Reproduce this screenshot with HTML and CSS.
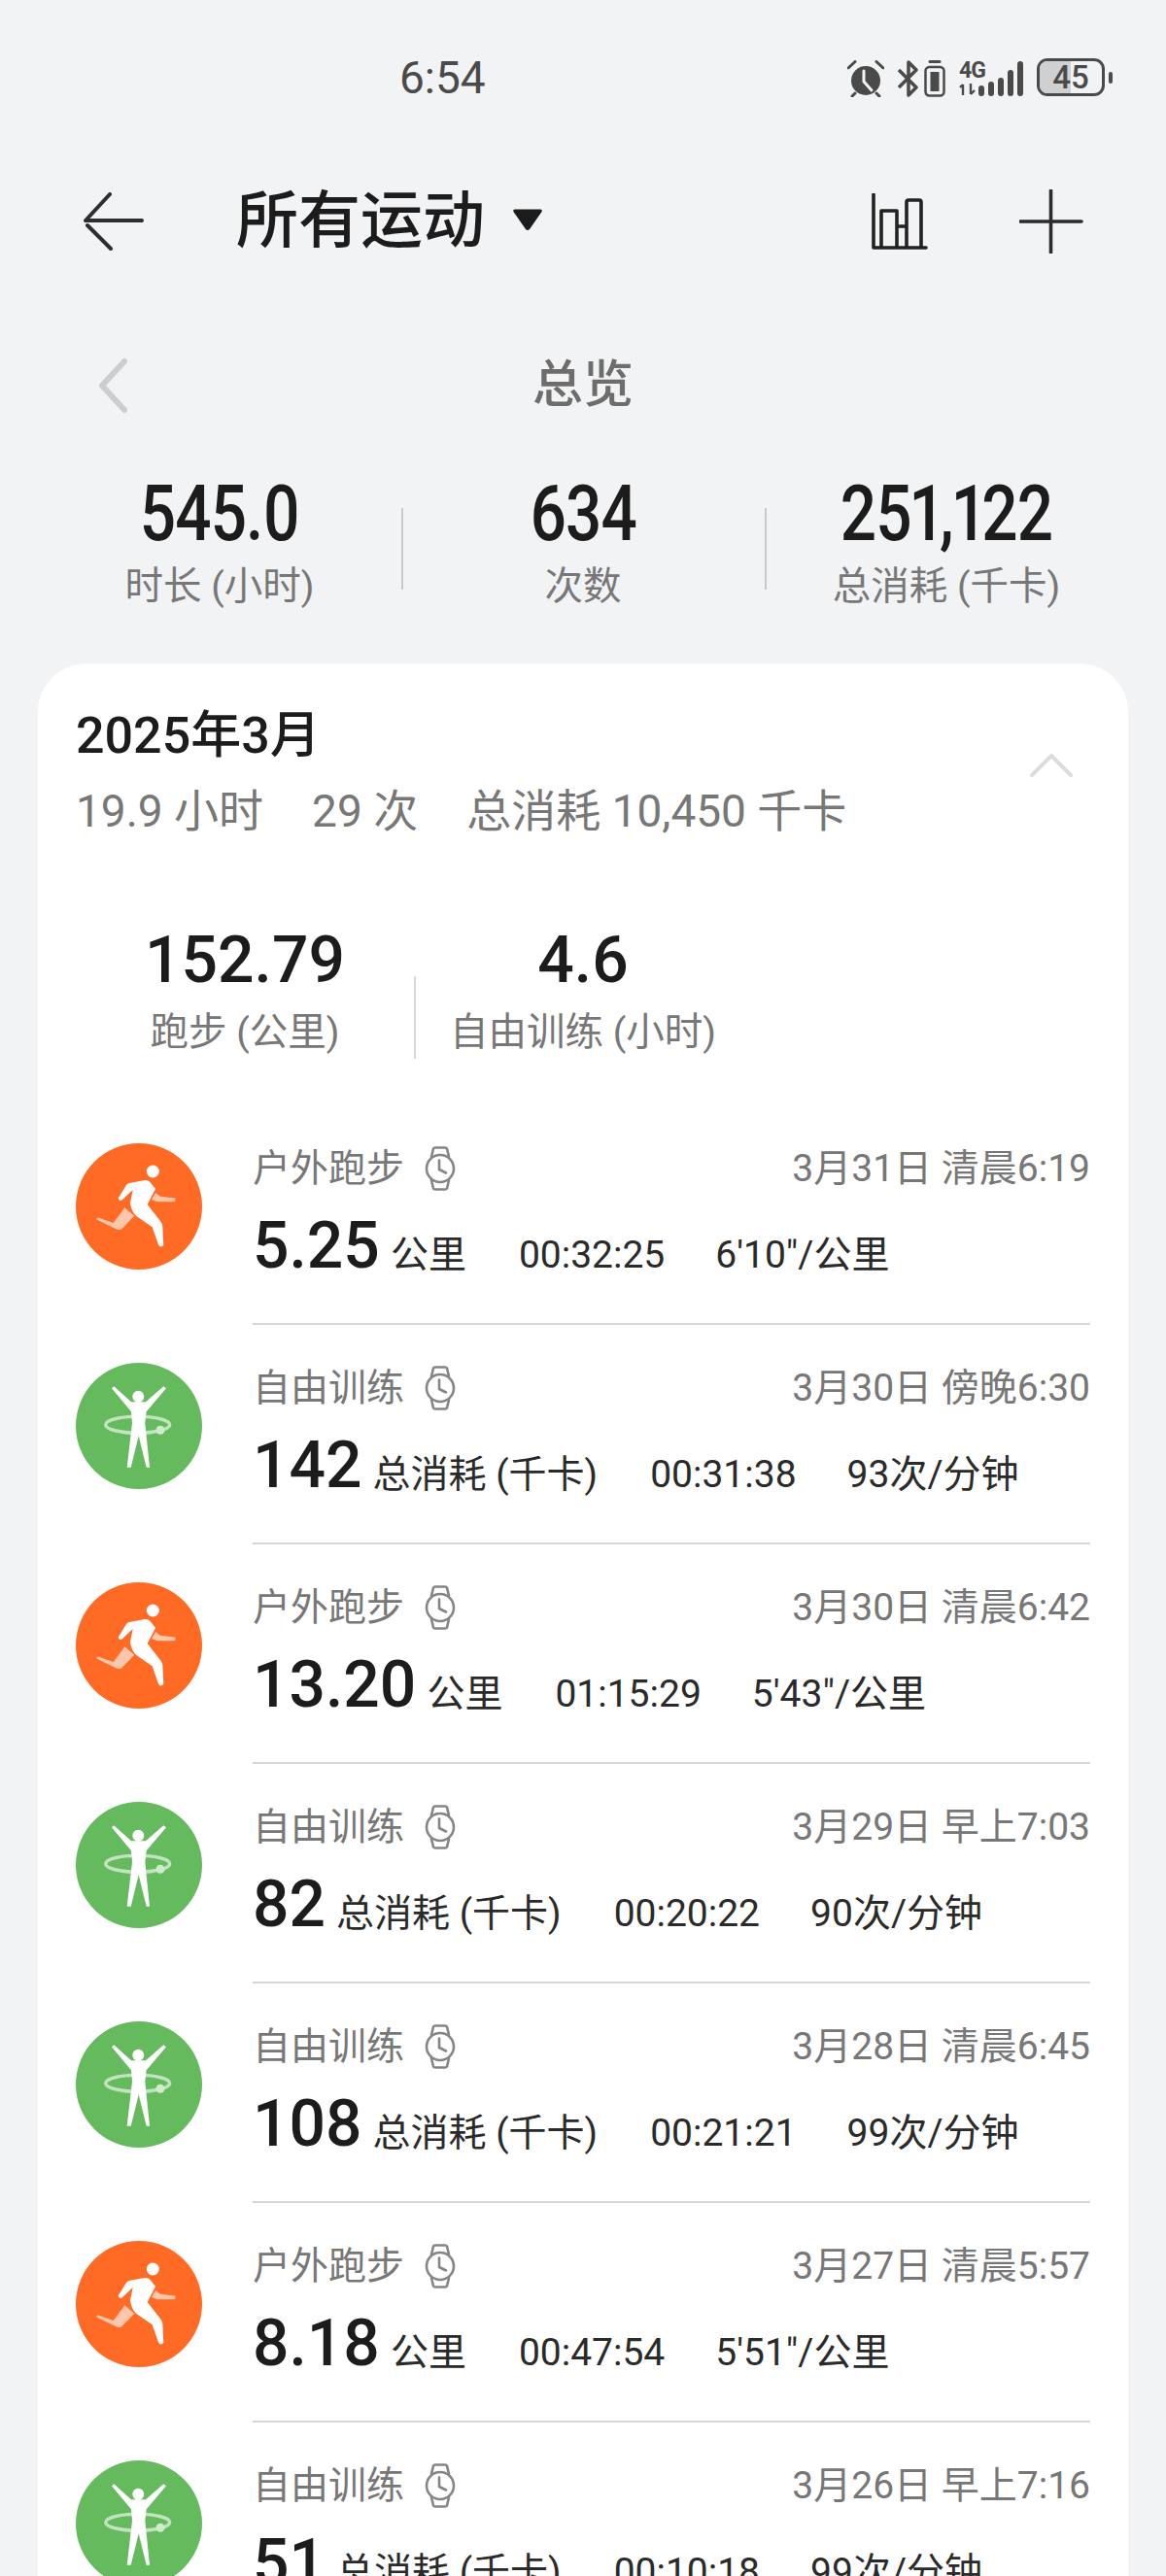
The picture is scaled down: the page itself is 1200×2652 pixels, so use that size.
FILE: index.html
```html
<!DOCTYPE html>
<html lang="zh-CN">
<head>
<meta charset="utf-8">
<title>所有运动</title>
<link rel="stylesheet" href="styles.css">
</head>
<body>
<svg class="defs" width="0" height="0" aria-hidden="true">
  <symbol id="run" viewBox="0 0 130 130">
    <circle cx="65" cy="65" r="65" fill="#ff6a24"/>
    <path d="M82 51 87 54.700 102 56.500Q103.500 58.500 101.300 60.300L84 60.300 78 58ZM21.300 78.500Q21 76.500 23 76.500L38.700 82 50.300 66.300 60.300 74.700 47 88.500Q45 89.500 42 88.500Z" fill="#fff" opacity=".62"/>
    <circle cx="79.300" cy="29" r="6.500" fill="#fff"/>
    <path d="M43.700 56.500 52 43Q53 41.500 55 41L71 38Q74 37.500 76.500 40L82 47 73.700 63 87.700 81Q89 83 89.300 85L90.300 105Q87 108 85 104.500L78.700 86.300 62 74.700Q57 70 56 61.300L58.700 48 47.500 58.500Q44 60 43.700 56.500Z" fill="#fff"/>
  </symbol>
  <symbol id="hoop" viewBox="0 0 130 130">
    <circle cx="65" cy="65" r="65" fill="#65ba5e"/>
    <ellipse cx="63.700" cy="63.700" rx="33" ry="8.500" fill="none" stroke="#fff" stroke-width="3.500" opacity=".6"/>
    <circle cx="64.300" cy="34.700" r="6" fill="#fff"/>
    <path d="M37 26.300 39.300 24.300 57 40.300H72L90.300 24.300 93 26.300 72.700 50.300 71.300 62 76 107.700H72.700L64.700 75.300 56.700 107.700H52.700L58 62 57 50.300Z" fill="#fff"/>
    <circle cx="87" cy="69.300" r="4.500" fill="#cfeccd"/>
  </symbol>
  <symbol id="watch" viewBox="0 0 32 46">
    <g fill="none" stroke="#858585" stroke-width="2.600" stroke-linejoin="round" stroke-linecap="round">
      <path d="M7 11 9 2.500Q9.500 1.500 11 1.500H21Q22.500 1.500 23 2.500L25 11M7 35 9 43.500Q9.500 44.500 11 44.500H21Q22.500 44.500 23 43.500L25 35"/>
      <circle cx="16" cy="23" r="14"/>
      <path d="M15 14.500V24L22 27.500"/>
    </g>
  </symbol>
</svg>

<div class="status">
  <span class="time">6:54</span>
  <div class="status-icons">
    <svg class="s-alarm" viewBox="0 0 38 38"><path d="M1 8 8 1.500M37 8 30 1.500M8 34 5 37M30 34 33 37" fill="none" stroke="#4a4a4a" stroke-width="3" stroke-linecap="round"/><circle cx="19" cy="21" r="15" fill="#4a4a4a"/><path d="M17 11V22L25 31" fill="none" stroke="#f1f3f5" stroke-width="3" stroke-linecap="round"/></svg>
    <svg class="s-bt" viewBox="0 0 24 38"><path d="M2 10 20 28 12 36V2L20 10 2 28" fill="none" stroke="#4a4a4a" stroke-width="3.500" stroke-linejoin="round"/></svg>
    <svg class="s-bat" viewBox="0 0 22 38"><path d="M6 1.500H16" stroke="#4a4a4a" stroke-width="3" stroke-linecap="round"/><rect x="1.500" y="7" width="19" height="29.500" rx="4" fill="none" stroke="#4a4a4a" stroke-width="2.500"/><rect x="6.500" y="12" width="9" height="20" fill="#4a4a4a"/></svg>
    <div class="s-net">
      <span class="s-4g">4G</span>
      <svg class="s-arrows" viewBox="0 0 18 12"><path d="M4 1V12M4 1 1 4M12 0V11M12 11 16 7" fill="none" stroke="#4a4a4a" stroke-width="2.400"/></svg>
    </div>
    <div class="s-bars"><i class="b1"></i><i class="b2"></i><i class="b3"></i><i class="b4"></i><i class="b5"></i></div>
    <div class="s-battery"><div class="s-fill"></div><span class="s-level">45</span></div>
    <div class="s-nub"></div>
  </div>
</div>

<header class="topbar">
  <svg class="ic-back" viewBox="0 0 64 60"><path d="M28 2 3 29H61M5 34 29 58" fill="none" stroke="#2e2e2e" stroke-width="4" stroke-linecap="round" stroke-linejoin="round"/></svg>
  <h1 class="title">所有运动</h1>
  <svg class="ic-drop" viewBox="0 0 32 24"><path d="M3 1.500H29Q31.500 1.500 30.500 4L18 22Q16 24 14 22L1.500 4Q.5 1.500 3 1.500Z" fill="#1c1c1c"/></svg>
  <svg class="ic-chart" viewBox="0 0 58 58"><path d="M2 1V56H56M10 56V18H26V56M26 34H36M36 56V9Q36 7 38 7H49Q51 7 51 9V56" fill="none" stroke="#222" stroke-width="3.600" stroke-linecap="round" stroke-linejoin="round"/></svg>
  <svg class="ic-plus" viewBox="0 0 66 66"><path d="M32.500 1V65M1 33H64" fill="none" stroke="#2b2b2b" stroke-width="3.600" stroke-linecap="round"/></svg>
</header>

<section class="overview">
  <div class="ov-head">
    <svg class="ic-prev" viewBox="0 0 30 56"><path d="M27 3 4 28 27 53" fill="none" stroke="#cdcdcd" stroke-width="6" stroke-linecap="round" stroke-linejoin="round"/></svg>
    <h2 class="ov-title">总览</h2>
  </div>
  <div class="ov-stats">
    <div class="stat"><div class="stat-val">545.0</div><div class="stat-lab">时长 (小时)</div></div>
    <div class="stat"><div class="stat-val">634</div><div class="stat-lab">次数</div></div>
    <div class="stat"><div class="stat-val">251,122</div><div class="stat-lab">总消耗 (千卡)</div></div>
  </div>
</section>

<main class="card">
  <div class="month">
    <div>
      <div class="month-title">2025年3月</div>
      <div class="month-sub"><span>19.9 小时</span><span>29 次</span><span>总消耗 10,450 千卡</span></div>
    </div>
    <svg class="ic-up" viewBox="0 0 44 24"><path d="M2 22 22 2 42 22" fill="none" stroke="#dcdcdc" stroke-width="4" stroke-linecap="round" stroke-linejoin="round"/></svg>
  </div>
  <div class="totals">
    <div class="total"><div class="total-val">152.79</div><div class="total-lab">跑步 (公里)</div></div>
    <div class="total"><div class="total-val">4.6</div><div class="total-lab">自由训练 (小时)</div></div>
  </div>

  <article class="row">
    <svg class="badge"><use href="#run"/></svg>
    <div class="row-body">
      <div class="row-top"><span class="row-name">户外跑步</span><svg class="watch"><use href="#watch"/></svg><span class="row-date">3月31日 清晨6:19</span></div>
      <div class="row-data"><b>5.25</b><span class="unit">公里</span><span class="dur">00:32:25</span><span>6'10"/公里</span></div>
    </div>
  </article>
  <article class="row">
    <svg class="badge"><use href="#hoop"/></svg>
    <div class="row-body">
      <div class="row-top"><span class="row-name">自由训练</span><svg class="watch"><use href="#watch"/></svg><span class="row-date">3月30日 傍晚6:30</span></div>
      <div class="row-data"><b>142</b><span class="unit">总消耗 (千卡)</span><span class="dur">00:31:38</span><span>93次/分钟</span></div>
    </div>
  </article>
  <article class="row">
    <svg class="badge"><use href="#run"/></svg>
    <div class="row-body">
      <div class="row-top"><span class="row-name">户外跑步</span><svg class="watch"><use href="#watch"/></svg><span class="row-date">3月30日 清晨6:42</span></div>
      <div class="row-data"><b>13.20</b><span class="unit">公里</span><span class="dur">01:15:29</span><span>5'43"/公里</span></div>
    </div>
  </article>
  <article class="row">
    <svg class="badge"><use href="#hoop"/></svg>
    <div class="row-body">
      <div class="row-top"><span class="row-name">自由训练</span><svg class="watch"><use href="#watch"/></svg><span class="row-date">3月29日 早上7:03</span></div>
      <div class="row-data"><b>82</b><span class="unit">总消耗 (千卡)</span><span class="dur">00:20:22</span><span>90次/分钟</span></div>
    </div>
  </article>
  <article class="row">
    <svg class="badge"><use href="#hoop"/></svg>
    <div class="row-body">
      <div class="row-top"><span class="row-name">自由训练</span><svg class="watch"><use href="#watch"/></svg><span class="row-date">3月28日 清晨6:45</span></div>
      <div class="row-data"><b>108</b><span class="unit">总消耗 (千卡)</span><span class="dur">00:21:21</span><span>99次/分钟</span></div>
    </div>
  </article>
  <article class="row">
    <svg class="badge"><use href="#run"/></svg>
    <div class="row-body">
      <div class="row-top"><span class="row-name">户外跑步</span><svg class="watch"><use href="#watch"/></svg><span class="row-date">3月27日 清晨5:57</span></div>
      <div class="row-data"><b>8.18</b><span class="unit">公里</span><span class="dur">00:47:54</span><span>5'51"/公里</span></div>
    </div>
  </article>
  <article class="row">
    <svg class="badge"><use href="#hoop"/></svg>
    <div class="row-body">
      <div class="row-top"><span class="row-name">自由训练</span><svg class="watch"><use href="#watch"/></svg><span class="row-date">3月26日 早上7:16</span></div>
      <div class="row-data"><b>51</b><span class="unit">总消耗 (千卡)</span><span class="dur">00:10:18</span><span>99次/分钟</span></div>
    </div>
  </article>
</main>
</body>
</html>
```
FILE: styles.css
```css
* { box-sizing: border-box; }
html, body { margin: 0; padding: 0; }
body {
  width: 1200px;
  height: 2652px;
  overflow: hidden;
  background: #f1f3f5;
  color: #1c1c1c;
  font-family: Roboto, "Noto Sans CJK SC", sans-serif;
}
.defs { position: absolute; }
h1, h2 { margin: 0; font-weight: inherit; font-size: inherit; }

/* status bar */
.status { height: 163px; display: flex; align-items: flex-start; justify-content: space-between; padding: 52px 55px 0 411px; }
.time { font-size: 46px; line-height: 56px; color: #4a4a4a; font-weight: 400; }
.status-icons { display: flex; align-items: flex-start; padding-top: 10px; }
.s-alarm { width: 38px; height: 38px; margin-right: 13px; }
.s-bt { width: 24px; height: 38px; margin-right: 4px; }
.s-bat { width: 22px; height: 38px; margin-right: 14px; }
.s-net { width: 20px; display: flex; flex-direction: column; }
.s-4g { font-size: 23px; line-height: 22px; font-weight: 700; color: #4a4a4a; height: 22px; letter-spacing: -1px; white-space: nowrap; }
.s-arrows { width: 18px; height: 12px; margin-top: 2px; }
.s-bars { display: flex; align-items: flex-end; gap: 4px; width: 46px; height: 37px; margin-right: 14px; }
.s-bars i { display: block; width: 6px; background: #4a4a4a; border-radius: 3px; }
.s-bars .b1 { height: 11px; }
.s-bars .b2 { height: 15px; }
.s-bars .b3 { height: 19px; }
.s-bars .b4 { height: 27px; }
.s-bars .b5 { height: 36px; }
.s-battery { position: relative; width: 70px; height: 39px; margin-top: -2px; border: 3.500px solid #4a4a4a; border-radius: 11px; overflow: hidden; display: flex; align-items: center; justify-content: center; }
.s-fill { position: absolute; left: 0; top: 0; bottom: 0; width: 32px; background: #cfd0d2; }
.s-level { position: relative; font-size: 33px; line-height: 32px; font-weight: 500; color: #4a4a4a; }
.s-nub { width: 4px; height: 12px; margin: 12px 0 0 4px; background: #4a4a4a; border-radius: 2px; }

/* top bar */
.topbar { height: 130px; display: flex; align-items: center; padding: 0 85px; }
.ic-back { width: 64px; height: 60px; flex: none; }
.title { margin-left: 94px; font-size: 64px; line-height: 80px; font-weight: 500; color: #1c1c1c; }
.ic-drop { width: 32px; height: 24px; margin: 0 0 4px 28px; flex: none; }
.ic-chart { width: 58px; height: 58px; margin-left: auto; flex: none; }
.ic-plus { width: 66px; height: 66px; margin-left: 94px; flex: none; }

/* overview */
.overview { padding: 0 39px; }
.ov-head { position: relative; height: 72px; margin-top: 68px; display: flex; align-items: center; justify-content: center; }
.ic-prev { position: absolute; left: 62px; top: 8px; width: 30px; height: 56px; }
.ov-title { font-size: 52px; line-height: 72px; font-weight: 500; color: #6d6d6d; }
.ov-stats { display: grid; grid-template-columns: repeat(3, 374px); margin-top: 54px; }
.stat { position: relative; text-align: center; }
.stat + .stat::before { content: ""; position: absolute; left: 0; top: 36px; height: 84px; width: 2px; background: #c9cacc; }
.stat-val { font-size: 80px; line-height: 84px; font-weight: 500; color: #1c1c1c; font-variant-numeric: proportional-nums; letter-spacing: -1px; transform: scaleX(.82); }
.stat-lab { font-size: 39.500px; line-height: 50px; color: #777; margin-top: 8px; }

/* month card */
.card { margin: 54px 39px 0; width: 1122px; height: 1970px; background: #fff; border-radius: 50px 50px 0 0; padding: 0 39px; overflow: hidden; }
.month { display: flex; justify-content: space-between; align-items: flex-start; padding-top: 44px; }
.month-title { font-size: 52px; line-height: 62px; font-weight: 500; color: #1c1c1c; }
.month-sub { display: flex; gap: 50px; font-size: 46px; line-height: 56px; color: #777; margin-top: 18px; }
.ic-up { width: 44px; height: 24px; margin: 49px 18px 0 0; }
.totals { display: grid; grid-template-columns: repeat(2, 348px); margin-top: 86px; }
.total { position: relative; text-align: center; }
.total + .total::before { content: ""; position: absolute; left: 0; top: 56px; height: 85px; width: 2px; background: #d8d8d8; }
.total-val { font-size: 66px; line-height: 80px; font-weight: 500; color: #1c1c1c; }
.total-lab { font-size: 39.500px; line-height: 50px; color: #777; margin-top: 9px; }

/* rows */
.row { display: flex; height: 226px; }
.totals + .row { margin-top: 50px; }
.badge { width: 130px; height: 130px; margin-top: 39px; flex: none; }
.row-body { flex: 1; margin-left: 52px; border-bottom: 2px solid #d6d6d6; padding-top: 40px; }
.row-top { display: flex; align-items: center; height: 50px; }
.row-name { font-size: 39px; line-height: 50px; color: #777; }
.watch { width: 32px; height: 46px; margin-left: 21px; }
.row-date { margin-left: auto; font-size: 39px; line-height: 50px; color: #777; }
.row-data { display: flex; align-items: baseline; margin-top: 20px; font-size: 39px; line-height: 70px; color: #2a2a2a; }
.row-data b { font-size: 66px; font-weight: 500; color: #1c1c1c; }
.unit { margin-left: 11px; margin-right: 54px; }
.dur { margin-right: 52px; }
```
